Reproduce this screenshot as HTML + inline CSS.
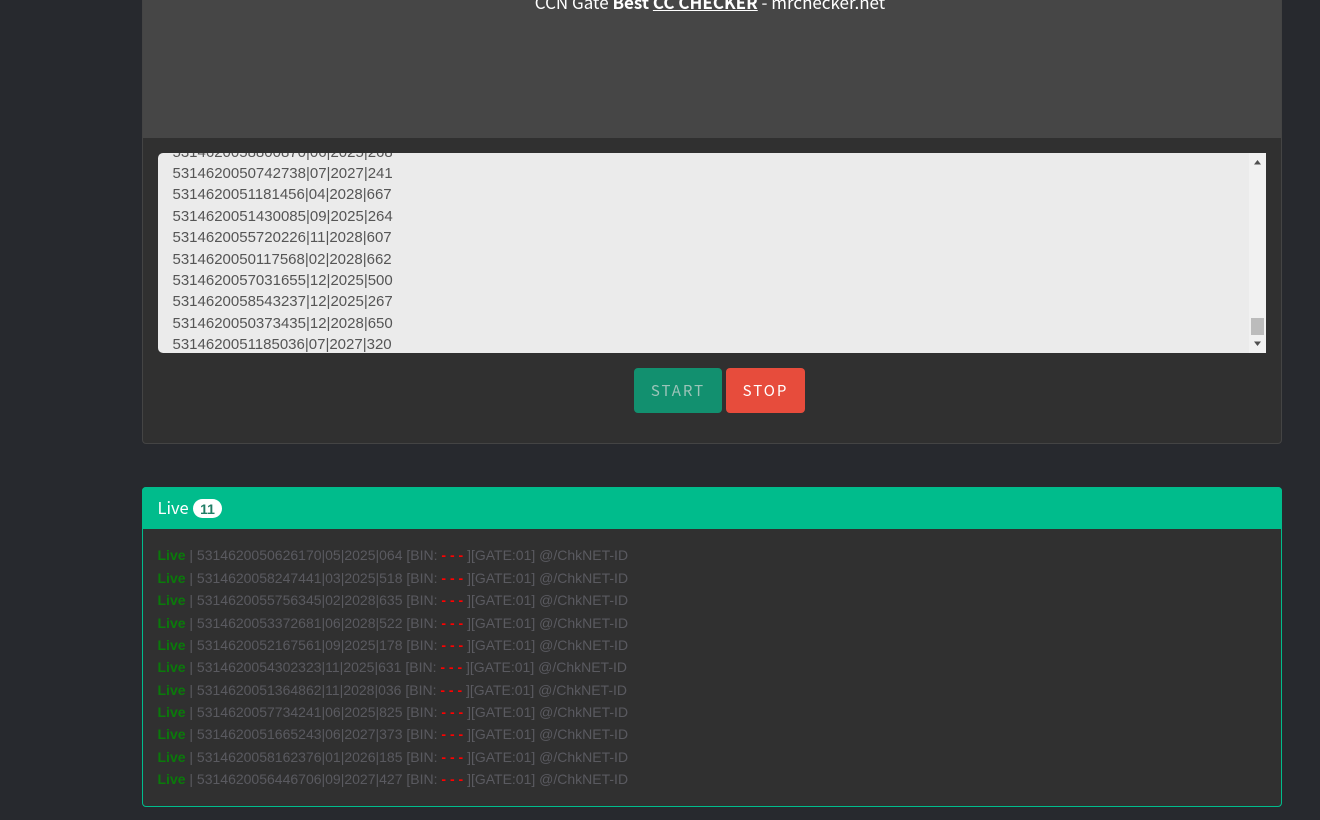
<!DOCTYPE html>
<html><head><meta charset="utf-8"><style>
*{box-sizing:border-box}
html,body{margin:0;padding:0;width:1320px;height:820px;overflow:hidden;background:#27292e}
body{position:relative;font-family:"Liberation Sans",sans-serif}
.abs{position:absolute}
.card1{left:142px;top:-60px;width:1140px;height:504px;background:#303030;border:1px solid #444;border-radius:4px;overflow:hidden}
.head{left:0;top:0;width:1138px;height:197px;background:#464646}
.title{left:-2px;top:49px;width:1138px;text-align:center;color:#fff;font:17px/24px "Noto Sans CJK JP","Liberation Sans",sans-serif;white-space:nowrap}
.ta{left:158px;top:153px;width:1108px;height:200px;background:#ebebeb;border-radius:5px 0 0 5px;overflow:hidden;color:#555;font-size:15px}
.ta div{position:absolute;left:14.500px;white-space:nowrap;line-height:20px}
.ta div.sb{left:1091px;top:0;width:17px;height:200px;background:#f1f1f1}
.thumb{left:2px;top:165px;width:13px;height:17px;background:#bcbcbc}
.btn{top:368px;height:45px;border-radius:4px;color:#fff;font:15px/45px "Noto Sans CJK JP","Liberation Sans",sans-serif;letter-spacing:2px;text-align:center}
.card2{left:142px;top:487px;width:1140px;height:320px;background:#303030;border:1px solid #00bc8c;border-radius:4px}
.ch{left:-1px;top:-1px;width:1140px;height:42px;background:#00bc8c;border-radius:4px 4px 0 0}
.l{position:absolute;left:157.500px;font-size:14px;line-height:20px;color:#5a5a60;white-space:nowrap}
.l b{color:#0a7a0a}
.l i{font-style:normal;font-weight:bold;color:#f00}
</style></head><body>
<div class="abs card1"><div class="abs head"><div class="abs title">CCN Gate <b>Best</b> <b><u>CC CHECKER</u></b> - mrchecker.net</div></div></div>
<div class="abs ta">
<div style="top:-10px">5314620058800870|06|2025|268</div>
<div style="top:11px">5314620050742738|07|2027|241</div>
<div style="top:32px">5314620051181456|04|2028|667</div>
<div style="top:54px">5314620051430085|09|2025|264</div>
<div style="top:75px">5314620055720226|11|2028|607</div>
<div style="top:97px">5314620050117568|02|2028|662</div>
<div style="top:118px">5314620057031655|12|2025|500</div>
<div style="top:139px">5314620058543237|12|2025|267</div>
<div style="top:161px">5314620050373435|12|2028|650</div>
<div style="top:182px">5314620051185036|07|2027|320</div>
<div class="sb"><span class="abs thumb"></span>
<svg class="abs" style="left:0;top:0" width="17" height="200"><path d="M5 11.500L8.500 7L12 11.500Z M5 188.500L8.500 193L12 188.500Z" fill="#505050"/></svg></div>
</div>
<div class="abs btn" style="left:634px;width:88px;background:#12906f;color:#9cc4b9">START</div>
<div class="abs btn" style="left:726px;width:79px;background:#e74c3c">STOP</div>
<div class="abs card2"><div class="abs ch"></div></div>
<div class="abs" style="left:157.500px;top:495px;color:#fff;font:16.500px/24px 'Noto Sans CJK JP','Liberation Sans',sans-serif">Live</div>
<div class="abs" style="left:193px;top:499px;width:29px;height:19px;border-radius:10px;background:#fff;color:#1f7d65;font:bold 14px/20px 'Liberation Sans',sans-serif;text-align:center">11</div>
<div class="l" style="top:545px"><b>Live</b> | 5314620050626170|05|2025|064 [BIN: <i>- - - </i>][GATE:01] @/ChkNET-ID</div>
<div class="l" style="top:568px"><b>Live</b> | 5314620058247441|03|2025|518 [BIN: <i>- - - </i>][GATE:01] @/ChkNET-ID</div>
<div class="l" style="top:590px"><b>Live</b> | 5314620055756345|02|2028|635 [BIN: <i>- - - </i>][GATE:01] @/ChkNET-ID</div>
<div class="l" style="top:613px"><b>Live</b> | 5314620053372681|06|2028|522 [BIN: <i>- - - </i>][GATE:01] @/ChkNET-ID</div>
<div class="l" style="top:635px"><b>Live</b> | 5314620052167561|09|2025|178 [BIN: <i>- - - </i>][GATE:01] @/ChkNET-ID</div>
<div class="l" style="top:657px"><b>Live</b> | 5314620054302323|11|2025|631 [BIN: <i>- - - </i>][GATE:01] @/ChkNET-ID</div>
<div class="l" style="top:680px"><b>Live</b> | 5314620051364862|11|2028|036 [BIN: <i>- - - </i>][GATE:01] @/ChkNET-ID</div>
<div class="l" style="top:702px"><b>Live</b> | 5314620057734241|06|2025|825 [BIN: <i>- - - </i>][GATE:01] @/ChkNET-ID</div>
<div class="l" style="top:724px"><b>Live</b> | 5314620051665243|06|2027|373 [BIN: <i>- - - </i>][GATE:01] @/ChkNET-ID</div>
<div class="l" style="top:747px"><b>Live</b> | 5314620058162376|01|2026|185 [BIN: <i>- - - </i>][GATE:01] @/ChkNET-ID</div>
<div class="l" style="top:769px"><b>Live</b> | 5314620056446706|09|2027|427 [BIN: <i>- - - </i>][GATE:01] @/ChkNET-ID</div>
</body></html>
